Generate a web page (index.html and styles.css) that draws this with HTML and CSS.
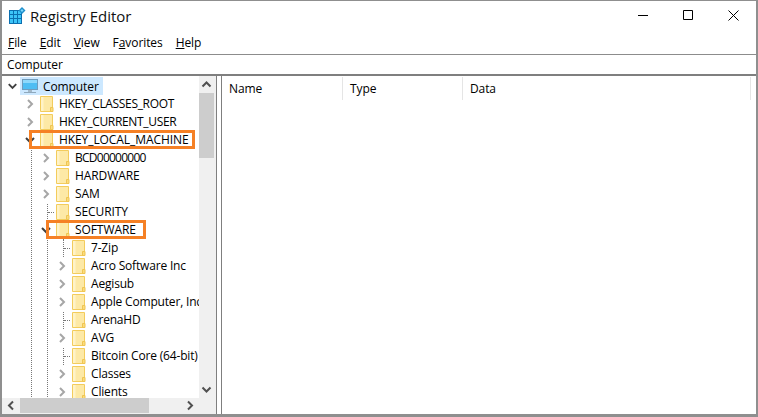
FILE: index.html
```html
<!DOCTYPE html>
<html lang="en">
<head>
<meta charset="utf-8">
<title>Registry Editor</title>
<link rel="stylesheet" href="styles.css">
</head>
<body>
<svg class="defs" width="0" height="0" aria-hidden="true">
  <symbol id="folder" viewBox="0 0 14 18">
    <path d="M.5 2.500h12v15h-12z" transform="translate(0 -1)" fill="#fde9a6" stroke="#f3cc5c"/>
    <path d="M1 2h2.500v14H1z" fill="#fff3c8"/>
    <path d="M10.500 12.500h2.500v4h-2.500z" fill="#fcdc7c" stroke="#efc552"/>
  </symbol>
  <symbol id="right" viewBox="0 0 16 18">
    <path d="M6 5l4 4-4 4" fill="none" stroke="#a6a6a6" stroke-width="2"/>
  </symbol>
  <symbol id="down" viewBox="0 0 16 18">
    <path d="M4 7l4 4 4-4" fill="none" stroke="#404040" stroke-width="2"/>
  </symbol>
</svg>
<div class="window">
  <header class="titlebar">
    <svg class="app-icon" width="17" height="17" viewBox="0 0 17 17">
      <rect x="0" y="3" width="13" height="14" fill="#0b6fb0"/>
      <path d="M1 4h3v3H1zM5 4h3v3H5zM9 4h3v3H9zM1 8h3v3H1zM5 8h3v3H5zM9 8h3v3H9zM1 12h3v4H1zM5 12h3v4H5zM9 12h3v4H9z" fill="#3cc4f8"/>
      <path d="M13 0l3.500 3.500L13 7 9.500 3.500z" fill="#1f8fcc"/>
      <path d="M13 2l1.500 1.500L13 5l-1.500-1.500z" fill="#7fd8fa"/>
    </svg>
    <span class="title">Registry Editor</span>
    <div class="caption">
      <span class="cap-btn"><svg width="11" height="11" viewBox="0 0 11 11"><path d="M0 5.500h10" stroke="#000" fill="none"/></svg></span>
      <span class="cap-btn"><svg width="11" height="11" viewBox="0 0 11 11"><path d="M.5.500h9v9h-9z" stroke="#000" fill="none"/></svg></span>
      <span class="cap-btn"><svg width="11" height="11" viewBox="0 0 11 11"><path d="M.5.500l10 10M10.500.500l-10 10" stroke="#000" fill="none"/></svg></span>
    </div>
  </header>
  <nav class="menubar">
    <span class="menu"><u>F</u>ile</span>
    <span class="menu"><u>E</u>dit</span>
    <span class="menu"><u>V</u>iew</span>
    <span class="menu">F<u>a</u>vorites</span>
    <span class="menu"><u>H</u>elp</span>
  </nav>
  <div class="address">Computer</div>
  <main class="panes">
    <section class="tree-pane">
      <div class="tree-top">
        <div class="tree">
          <div class="row root">
            <svg class="twist"><use href="#down"/></svg>
            <span class="selected">
              <svg class="computer" width="16" height="18" viewBox="0 0 16 18">
                <rect x=".5" y="2.500" width="15" height="10" fill="#4fbdf3" stroke="#6f9cbd"/>
                <rect x="1" y="3" width="14" height="3" fill="#8fd8fb"/>
                <path d="M6 13h4v2H6z" fill="#a3b8c8"/>
                <path d="M2 15.500h12" stroke="#8fa9bd"/>
              </svg>
              <span class="root-label">Computer</span>
            </span>
          </div>
          <div class="group">
            <div class="row"><svg class="twist"><use href="#right"/></svg><svg class="folder"><use href="#folder"/></svg><span class="label tight">HKEY_CLASSES_ROOT</span></div>
            <div class="row"><svg class="twist"><use href="#right"/></svg><svg class="folder"><use href="#folder"/></svg><span class="label tight">HKEY_CURRENT_USER</span></div>
            <div class="row"><svg class="twist"><use href="#down"/></svg><svg class="folder"><use href="#folder"/></svg><span class="label caps">HKEY_LOCAL_MACHINE</span><span class="mark mark-hklm"></span></div>
            <div class="group">
              <div class="row"><svg class="twist"><use href="#right"/></svg><svg class="folder"><use href="#folder"/></svg><span class="label digits">BCD00000000</span></div>
              <div class="row"><svg class="twist"><use href="#right"/></svg><svg class="folder"><use href="#folder"/></svg><span class="label caps">HARDWARE</span></div>
              <div class="row"><svg class="twist"><use href="#right"/></svg><svg class="folder"><use href="#folder"/></svg><span class="label caps">SAM</span></div>
              <div class="row"><span class="twist leaf"></span><svg class="folder"><use href="#folder"/></svg><span class="label caps">SECURITY</span></div>
              <div class="row"><svg class="twist"><use href="#down"/></svg><svg class="folder"><use href="#folder"/></svg><span class="label caps">SOFTWARE</span><span class="mark mark-soft"></span></div>
              <div class="group">
                <div class="row"><span class="twist leaf"></span><svg class="folder"><use href="#folder"/></svg><span class="label">7-Zip</span></div>
                <div class="row"><svg class="twist"><use href="#right"/></svg><svg class="folder"><use href="#folder"/></svg><span class="label">Acro Software Inc</span></div>
                <div class="row"><svg class="twist"><use href="#right"/></svg><svg class="folder"><use href="#folder"/></svg><span class="label">Aegisub</span></div>
                <div class="row"><svg class="twist"><use href="#right"/></svg><svg class="folder"><use href="#folder"/></svg><span class="label">Apple Computer, Inc.</span></div>
                <div class="row"><span class="twist leaf"></span><svg class="folder"><use href="#folder"/></svg><span class="label">ArenaHD</span></div>
                <div class="row"><svg class="twist"><use href="#right"/></svg><svg class="folder"><use href="#folder"/></svg><span class="label">AVG</span></div>
                <div class="row"><span class="twist leaf"></span><svg class="folder"><use href="#folder"/></svg><span class="label">Bitcoin Core (64-bit)</span></div>
                <div class="row"><svg class="twist"><use href="#right"/></svg><svg class="folder"><use href="#folder"/></svg><span class="label">Classes</span></div>
                <div class="row"><svg class="twist"><use href="#right"/></svg><svg class="folder"><use href="#folder"/></svg><span class="label">Clients</span></div>
              </div>
            </div>
          </div>
        </div>
        <div class="vscroll">
          <svg class="arrow" width="15" height="17" viewBox="0 0 15 17"><path d="M3.500 10.500l4-4 4 4" fill="none" stroke="#505050" stroke-width="2"/></svg>
          <div class="vtrack"><div class="vthumb"></div></div>
          <svg class="arrow" width="15" height="17" viewBox="0 0 15 17"><path d="M3.500 6.500l4 4 4-4" fill="none" stroke="#505050" stroke-width="2"/></svg>
        </div>
      </div>
      <div class="hscroll">
        <svg class="arrow" width="18" height="15" viewBox="0 0 18 15"><path d="M11 3.500l-4 4 4 4" fill="none" stroke="#505050" stroke-width="2"/></svg>
        <div class="htrack"><div class="hthumb"></div></div>
        <svg class="arrow" width="18" height="15" viewBox="0 0 18 15"><path d="M7 3.500l4 4-4 4" fill="none" stroke="#505050" stroke-width="2"/></svg>
      </div>
    </section>
    <section class="list-pane">
      <div class="col col-name">Name</div>
      <div class="col col-type">Type</div>
      <div class="col col-data">Data</div>
    </section>
  </main>
</div>
</body>
</html>
```
FILE: styles.css
```css
* { box-sizing: border-box; }
html, body { margin: 0; padding: 0; }
body {
  width: 758px;
  height: 417px;
  overflow: hidden;
  background: #fff;
  font-family: "Open Sans", "Noto Sans", sans-serif;
  font-size: 12px;
  color: #000;
}
.defs { position: absolute; }
.window {
  width: 758px;
  height: 417px;
  display: flex;
  flex-direction: column;
  border: solid #8f8f8f;
  border-width: 1px 2px 3px 2px;
  background: #fff;
}
.titlebar {
  height: 31px;
  display: flex;
  align-items: center;
  padding: 0 0 2px 7px;
}
.title {
  margin-left: 4px;
  font-size: 15px;
  letter-spacing: 0;
  color: #111;
}
.caption { margin-left: auto; display: flex; align-self: flex-start; }
.cap-btn {
  width: 45px;
  height: 29px;
  display: flex;
  align-items: center;
  justify-content: center;
}
.menubar {
  height: 22px;
  display: flex;
  align-items: center;
  padding: 0 0 2px 6px;
  gap: 13px;
  letter-spacing: -.08px;
}
.address {
  height: 22px;
  border-top: 1px solid #8c8c8c;
  border-bottom: 2px solid #7f7f7f;
  padding-left: 5px;
  line-height: 19px;
  letter-spacing: -.1px;
}
.panes {
  flex: 1;
  min-height: 0;
  display: flex;
}
.tree-pane {
  width: 215px;
  display: flex;
  flex-direction: column;
  border-right: 1px solid #7f7f7f;
}
.tree-top {
  flex: 1;
  min-height: 0;
  display: flex;
}
.tree {
  width: 197px;
  overflow: hidden;
  padding-top: 1px;
}
.row {
  position: relative;
  height: 18px;
  display: flex;
  align-items: center;
  white-space: nowrap;
}
.root { padding-left: 4px; }
.group {
  position: relative;
  padding-left: 16px;
}
.group::before {
  content: "";
  position: absolute;
  left: 29px;
  top: 0;
  bottom: 0;
  border-left: 1px dotted #777;
}
.twist {
  position: relative;
  z-index: 1;
  flex: none;
  width: 16px;
  height: 18px;
  margin-left: 4px;
  background: #fff;
}
.root .twist { margin-left: -1px; width: 15px; }
.leaf { background: none; }
.leaf::after {
  content: "";
  position: absolute;
  left: 10px;
  top: 9px;
  width: 6px;
  border-top: 1px dotted #777;
}
.folder {
  position: relative;
  z-index: 1;
  width: 14px;
  height: 18px;
  flex: none;
  margin-left: 2px;
}
.label {
  position: relative;
  z-index: 1;
  margin-left: 5px;
  line-height: 18px;
  letter-spacing: -.18px;
}
.caps { letter-spacing: -.08px; }
.tight { letter-spacing: -.33px; }
.digits { letter-spacing: -.75px; }
.selected {
  display: flex;
  align-items: center;
  height: 18px;
  padding: 0 4px 0 2px;
  background: #cce8ff;
}
.computer { flex: none; }
.root-label { margin-left: 5px; letter-spacing: -.1px; }
.mark {
  position: absolute;
  z-index: 2;
  border: 3px solid #f58025;
  pointer-events: none;
}
.mark-hklm { left: 11px; top: -1px; width: 166px; height: 19px; }
.mark-soft { left: 12px; top: -1px; width: 100px; height: 19px; }
.vscroll {
  width: 17px;
  background: #f0f0f0;
  display: flex;
  flex-direction: column;
}
.vtrack { flex: 1; min-height: 0; }
.vthumb { width: 15px; height: 65px; background: #cdcdcd; }
.hscroll {
  height: 16px;
  display: flex;
  background: #f0f0f0;
  padding-right: 17px;
}
.htrack { flex: 1; min-width: 0; }
.hthumb { width: 129px; height: 15px; background: #cdcdcd; }
.arrow { flex: none; }
.list-pane {
  flex: 1;
  margin-left: 4px;
  border-left: 1px solid #7f7f7f;
  display: flex;
  align-items: flex-start;
  padding-top: 1px;
}
.col {
  height: 23px;
  line-height: 24px;
  padding-left: 7px;
  border-right: 1px solid #e5e5e5;
  letter-spacing: -.1px;
}
.col-name { width: 121px; }
.col-type { width: 120px; }
.col-data { width: 288px; }
```
